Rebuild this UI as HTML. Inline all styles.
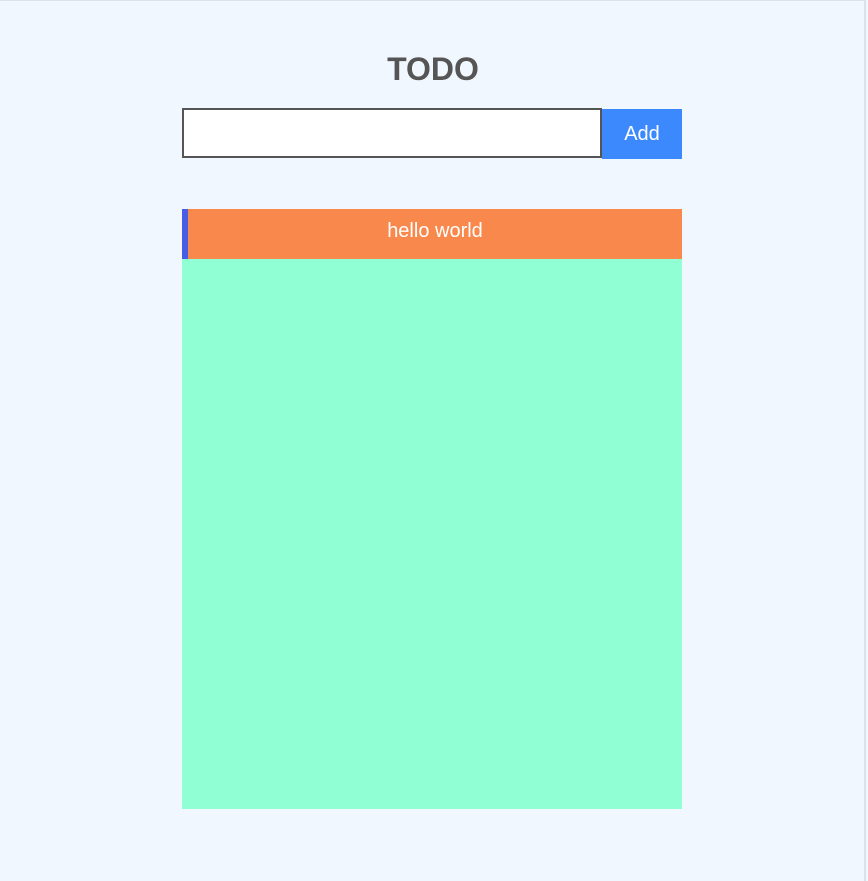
<!DOCTYPE html>
<html><head><style>
html,body{margin:0;padding:0}
body{width:868px;height:881px;background:#f0f7ff;position:relative;overflow:hidden;font-family:"Liberation Sans",sans-serif}
.frame{position:absolute;left:0;top:0;width:866px;height:881px;border-top:1px solid #dde2e8;border-right:2px solid #dde2e8;box-sizing:border-box}
h1{position:absolute;left:0;width:866px;top:51px;margin:0;text-align:center;font-size:32px;font-weight:bold;color:#555;line-height:36px}
.inp{position:absolute;left:182px;top:108px;width:420px;height:50px;box-sizing:border-box;border:2px solid #555;background:#fff}
.btn{position:absolute;left:602px;top:109px;width:80px;height:50px;background:#3b89fd;color:#fff;font-size:20px;text-align:center;line-height:51px}
.item{position:absolute;left:182px;top:209px;width:500px;height:50px;background:#f8884c;box-sizing:border-box;border-left:6px solid #475ee4;color:#fff;font-size:20px;text-align:center;line-height:45px}
.list{position:absolute;left:182px;top:259px;width:500px;height:550px;background:#90ffd4}
</style></head><body>
<div class="frame"></div>
<h1>TODO</h1>
<div class="inp"></div>
<div class="btn">Add</div>
<div class="list"></div>
<div class="item">hello world</div>
</body></html>
